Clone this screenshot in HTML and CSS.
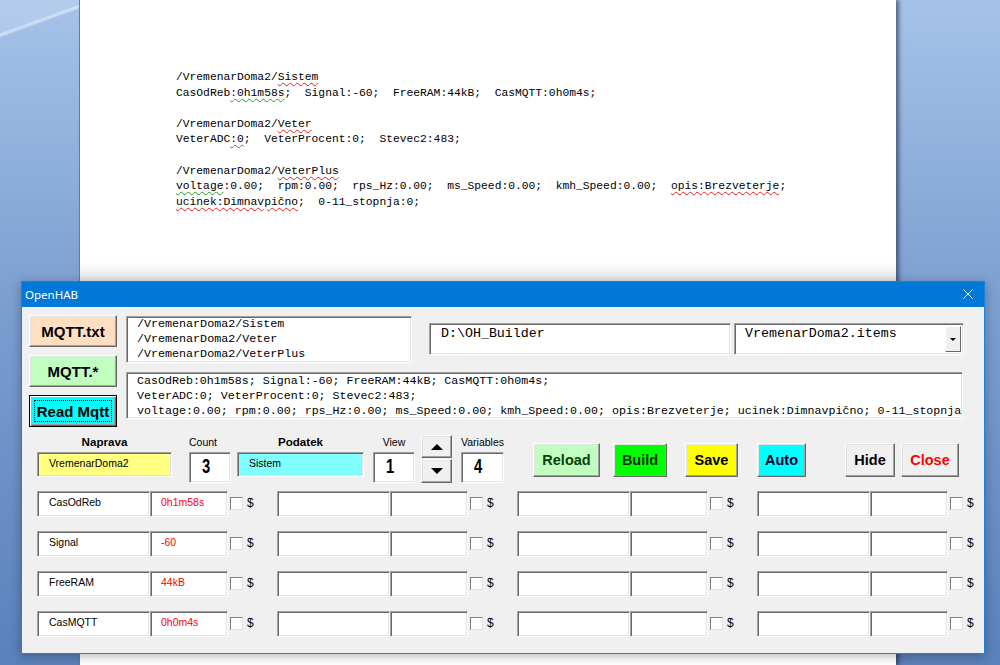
FILE: index.html
```html
<!DOCTYPE html>
<html lang="sl">
<head>
    <meta charset="UTF-8">
    <title>OpenHAB</title>
    <link rel="stylesheet" href="styles.css">
</head>
<body>

<div class="desk">

    <!-- Word page in the background -->
    <div class="page">
        <div class="doc">
            <div class="ln">/VremenarDoma2/<span class="sp">Sistem</span></div>
            <div class="ln">CasOdReb<span class="gr">:0h1m58s</span>;  Signal:-60;  FreeRAM:44kB;  CasMQTT:0h0m4s;</div>
            <div class="ln"> </div>
            <div class="ln">/VremenarDoma2/<span class="sp">Veter</span></div>
            <div class="ln">VeterADC<span class="gr">:0</span>;  VeterProcent:0;  Stevec2:483;</div>
            <div class="ln"> </div>
            <div class="ln">/VremenarDoma2/<span class="sp">VeterPlus</span></div>
            <div class="ln"><span class="gr">voltage</span>:0.00;  rpm:0.00;  rps_Hz:0.00;  ms_Speed:0.00;  kmh_Speed:0.00;  <span class="sp">opis:Brezveterje</span>;</div>
            <div class="ln"><span class="sp">ucinek:Dimnavpično</span>;  0-11_stopnja:0;</div>
        </div>
        <div class="page-gap"></div>
    </div>

    <!-- UserForm window -->
    <div class="dialog">
        <div class="titlebar">
            <span class="title">OpenHAB</span>
            <svg class="close-x" width="10" height="10" viewBox="0 0 10 10">
                <path d="M0.5 0.5 L9.5 9.5 M9.5 0.5 L0.5 9.5" stroke="#fff" stroke-width="1"/>
            </svg>
        </div>

        <div class="form">
            <div class="top">
                <div class="side">
                    <button class="btn b-txt">MQTT.txt</button>
                    <button class="btn b-all">MQTT.*</button>
                    <button class="btn b-read">Read Mqtt</button>
                </div>
                <div class="main">
                    <div class="main-row">
                        <div class="box list">/VremenarDoma2/Sistem<br>/VremenarDoma2/Veter<br>/VremenarDoma2/VeterPlus</div>
                        <div class="box path">D:\OH_Builder</div>
                        <div class="box combo">
                            <span class="combo-text">VremenarDoma2.items</span>
                            <span class="drop"><i></i></span>
                        </div>
                    </div>
                    <div class="box data">CasOdReb:0h1m58s; Signal:-60; FreeRAM:44kB; CasMQTT:0h0m4s;<br>VeterADC:0; VeterProcent:0; Stevec2:483;<br>voltage:0.00; rpm:0.00; rps_Hz:0.00; ms_Speed:0.00; kmh_Speed:0.00; opis:Brezveterje; ucinek:Dimnavpično; 0-11_stopnja</div>
                </div>
            </div>

            <div class="ctrl">
                <div class="field f-naprava">
                    <label class="lbl bold">Naprava</label>
                    <div class="box txt yellow">VremenarDoma2</div>
                </div>
                <div class="field f-count">
                    <label class="lbl left">Count</label>
                    <div class="box num"><span>3</span></div>
                </div>
                <div class="field f-podatek">
                    <label class="lbl bold">Podatek</label>
                    <div class="box txt cyan">Sistem</div>
                </div>
                <div class="field f-view">
                    <label class="lbl">View</label>
                    <div class="box num"><span>1</span></div>
                </div>
                <div class="spin">
                    <button class="btn spin-up"><i></i></button>
                    <button class="btn spin-down"><i></i></button>
                </div>
                <div class="field f-vars">
                    <label class="lbl left">Variables</label>
                    <div class="box num"><span>4</span></div>
                </div>
                <button class="btn act b-reload">Reload</button>
                <button class="btn act b-build">Build</button>
                <button class="btn act b-save">Save</button>
                <button class="btn act b-auto">Auto</button>
                <button class="btn act b-hide">Hide</button>
                <button class="btn act b-close">Close</button>
            </div>

            <div class="grid">
                <div class="cell"><div class="box name">CasOdReb</div><div class="box val">0h1m58s</div><span class="chk"></span><span class="dollar">$</span></div>
                <div class="cell"><div class="box name"></div><div class="box val"></div><span class="chk"></span><span class="dollar">$</span></div>
                <div class="cell"><div class="box name"></div><div class="box val"></div><span class="chk"></span><span class="dollar">$</span></div>
                <div class="cell"><div class="box name"></div><div class="box val"></div><span class="chk"></span><span class="dollar">$</span></div>

                <div class="cell"><div class="box name">Signal</div><div class="box val">-60</div><span class="chk"></span><span class="dollar">$</span></div>
                <div class="cell"><div class="box name"></div><div class="box val"></div><span class="chk"></span><span class="dollar">$</span></div>
                <div class="cell"><div class="box name"></div><div class="box val"></div><span class="chk"></span><span class="dollar">$</span></div>
                <div class="cell"><div class="box name"></div><div class="box val"></div><span class="chk"></span><span class="dollar">$</span></div>

                <div class="cell"><div class="box name">FreeRAM</div><div class="box val">44kB</div><span class="chk"></span><span class="dollar">$</span></div>
                <div class="cell"><div class="box name"></div><div class="box val"></div><span class="chk"></span><span class="dollar">$</span></div>
                <div class="cell"><div class="box name"></div><div class="box val"></div><span class="chk"></span><span class="dollar">$</span></div>
                <div class="cell"><div class="box name"></div><div class="box val"></div><span class="chk"></span><span class="dollar">$</span></div>

                <div class="cell"><div class="box name">CasMQTT</div><div class="box val">0h0m4s</div><span class="chk"></span><span class="dollar">$</span></div>
                <div class="cell"><div class="box name"></div><div class="box val"></div><span class="chk"></span><span class="dollar">$</span></div>
                <div class="cell"><div class="box name"></div><div class="box val"></div><span class="chk"></span><span class="dollar">$</span></div>
                <div class="cell"><div class="box name"></div><div class="box val"></div><span class="chk"></span><span class="dollar">$</span></div>
            </div>
        </div>
    </div>

</div>

</body>
</html>
```

FILE: styles.css
```css
/* Basic reset */
* {
    margin: 0;
    padding: 0;
    box-sizing: border-box;
}

body {
    font-family: "Liberation Sans", Arial, sans-serif;
    color: #000;
}

/* Desktop behind everything */
.desk {
    position: relative;
    width: 1000px;
    height: 665px;
    overflow: hidden;
    background:
        linear-gradient(160deg, rgba(255, 255, 255, 0.16) 0 3.2%, rgba(255, 255, 255, 0.45) 3.3% 3.5%, rgba(255, 255, 255, 0) 3.7%),
        linear-gradient(#a6c2e9, #7c9fd1 45%, #5a81bb);
}

/* Word document page */
.page {
    position: relative;
    margin-left: 80px;
    width: 816px;
    height: 665px;
    background: #fff;
    box-shadow: -1px 0 0 #6a7b93, 3px 0 4px rgba(20, 30, 50, 0.55);
    padding: 70px 0 0 96px;
}

.doc {
    font-family: "Liberation Mono", "Courier New", monospace;
    font-size: 11.3px;
    line-height: 15.6px;
}

.ln {
    white-space: pre;
    height: 15.6px;
}

.sp {
    text-decoration: underline wavy #e02020;
    text-decoration-thickness: 1px;
    text-underline-offset: 2px;
}

.gr {
    text-decoration: underline wavy #2a9a2a;
    text-decoration-thickness: 1px;
    text-underline-offset: 2px;
}

.page-gap {
    margin: 52px 0 0 -96px;
    height: 22px;
    background: linear-gradient(#fff, #dedede);
}

/* Dialog window */
.dialog {
    position: absolute;
    left: 21px;
    top: 281px;
    width: 964px;
    height: 373px;
    background: #f0f0f0;
    border: 1px solid #1883d7;
    box-shadow: 0 2px 10px rgba(0, 0, 0, 0.3);
}

.titlebar {
    height: 25px;
    background: #0078d7;
    color: #fff;
    display: flex;
    align-items: center;
    justify-content: space-between;
    padding: 0 11px 0 3px;
}

.title {
    font-family: "Noto Sans", "Open Sans", sans-serif;
    font-size: 11.5px;
    margin-top: -1px;
}

.close-x {
    display: block;
    margin-top: -1px;
}

.form {
    padding: 8px 0 0 7px;
}

/* Sunken text box */
.box {
    background: #fff;
    border: 1px solid;
    border-color: #a0a0a0 #fff #fff #a0a0a0;
    box-shadow: inset 1px 1px #696969, inset -1px -1px #e3e3e3;
    overflow: hidden;
    white-space: nowrap;
}

/* Raised button */
.btn {
    font-family: "Liberation Sans", Arial, sans-serif;
    font-weight: bold;
    background: #f0f0f0;
    border: 1px solid;
    border-color: #fff #696969 #696969 #fff;
    box-shadow: inset -1px -1px #a0a0a0, inset 1px 1px #e3e3e3;
    cursor: pointer;
}

/* Top section */
.top {
    display: flex;
    height: 112px;
}

.side {
    width: 88px;
    display: flex;
    flex-direction: column;
    gap: 8px;
}

.side .btn {
    height: 32px;
    font-size: 15px;
}

.b-txt { background: #ffdfc0; }
.b-all { background: #c0ffc0; }

.b-read {
    position: relative;
    background: #00ffff;
    border-color: #000;
    box-shadow: inset 1px 1px #fff, inset -1px -1px #696969, inset -2px -2px #a0a0a0;
}

.b-read::after {
    content: "";
    position: absolute;
    left: 4px;
    top: 4px;
    right: 4px;
    bottom: 4px;
    border: 1px dotted #000;
}

.main {
    margin: 1px 0 0 9px;
    width: 838px;
}

.main-row {
    display: flex;
    align-items: flex-start;
}

.list {
    width: 286px;
    height: 47px;
    font-family: "Liberation Mono", "Courier New", monospace;
    font-size: 11.7px;
    line-height: 15px;
    padding: 0 0 0 10px;
}

.path {
    margin: 7px 0 0 17px;
    width: 302px;
    height: 32px;
    font-family: "Liberation Mono", "Courier New", monospace;
    font-size: 13.3px;
    line-height: 20px;
    padding-left: 11px;
}

.combo {
    margin: 7px 0 0 3px;
    width: 230px;
    height: 32px;
    display: flex;
    font-family: "Liberation Mono", "Courier New", monospace;
    font-size: 13.3px;
    line-height: 20px;
    padding: 2px 2px 2px 0;
}

.combo-text {
    flex: 1;
    padding-left: 10px;
    margin-top: -2px;
}

.drop {
    width: 16px;
    background: #f0f0f0;
    border: 1px solid;
    border-color: #fff #696969 #696969 #fff;
    display: flex;
    align-items: center;
    justify-content: center;
}

.drop i {
    display: block;
    margin-top: 1px;
    border-left: 3px solid transparent;
    border-right: 3px solid transparent;
    border-top: 3px solid #000;
}

.data {
    margin-top: 9px;
    width: 837px;
    height: 47px;
    font-family: "Liberation Mono", "Courier New", monospace;
    font-size: 11.65px;
    line-height: 15px;
    padding: 0 0 0 10px;
}

/* Controls row */
.ctrl {
    display: flex;
    align-items: flex-start;
    height: 48px;
    margin-top: 8px;
    padding-left: 8px;
}

.field {
    display: flex;
    flex-direction: column;
}

.lbl {
    display: block;
    height: 17px;
    line-height: 14px;
    font-size: 10.5px;
    text-align: center;
}

.lbl.left { text-align: left; }

.lbl.bold {
    font-weight: bold;
    font-size: 11.6px;
}

.txt {
    height: 25px;
    font-size: 10.5px;
    line-height: 16px;
    padding: 2px 0 0 11px;
}

.yellow { background: #ffff80; }
.cyan { background: #80ffff; }

.num {
    height: 31px;
    font-weight: bold;
    font-size: 18px;
    line-height: 28px;
    padding-left: 12px;
}

.num span {
    display: inline-block;
    transform: scale(0.82, 1.08);
    transform-origin: left center;
}

.f-naprava { width: 135px; }
.f-count { width: 42px; margin-left: 17px; }
.f-podatek { width: 127px; margin-left: 6px; }
.f-view { width: 42px; margin-left: 9px; }
.f-vars { width: 43px; margin-left: 9px; }

.spin {
    width: 31px;
    margin-left: 6px;
    display: flex;
    flex-direction: column;
    gap: 1px;
}

.spin .btn {
    height: 23px;
    display: flex;
    align-items: center;
    justify-content: center;
}

.spin .spin-down { height: 24px; }

.spin-up i {
    display: block;
    border-left: 6px solid transparent;
    border-right: 6px solid transparent;
    border-bottom: 6px solid #000;
}

.spin-down i {
    display: block;
    border-left: 6px solid transparent;
    border-right: 6px solid transparent;
    border-top: 6px solid #000;
}

.act {
    height: 34px;
    margin-top: 8px;
    font-size: 14.5px;
}

.b-reload { width: 67px; margin-left: 29px; background: #c0ffc0; color: #0a400a; }
.b-build { width: 54px; margin-left: 13px; background: #00ff00; color: #053005; }
.b-save { width: 53px; margin-left: 18px; background: #ffff00; }
.b-auto { width: 49px; margin-left: 19px; background: #00ffff; color: #000030; }
.b-hide { width: 50px; margin-left: 39px; }
.b-close { width: 58px; margin-left: 6px; color: #ff0000; }

/* Variables grid */
.grid {
    display: grid;
    grid-template-columns: repeat(4, 240px);
    row-gap: 14px;
    margin-top: 8px;
    padding-left: 8px;
}

.cell {
    display: flex;
    align-items: flex-start;
    height: 26px;
}

.name,
.val {
    height: 26px;
    font-size: 10.5px;
    line-height: 16px;
    padding-top: 2px;
}

.name {
    width: 113px;
    padding-left: 11px;
}

.val {
    width: 78px;
    padding-left: 10px;
    color: #ff0000;
}

.chk {
    width: 13px;
    height: 13px;
    margin: 6px 0 0 2px;
    background: #fff;
    border: 1px solid;
    border-color: #808080 #e3e3e3 #e3e3e3 #808080;
}

.dollar {
    margin: 5px 0 0 4px;
    font-size: 12px;
    line-height: 14px;
}
```
